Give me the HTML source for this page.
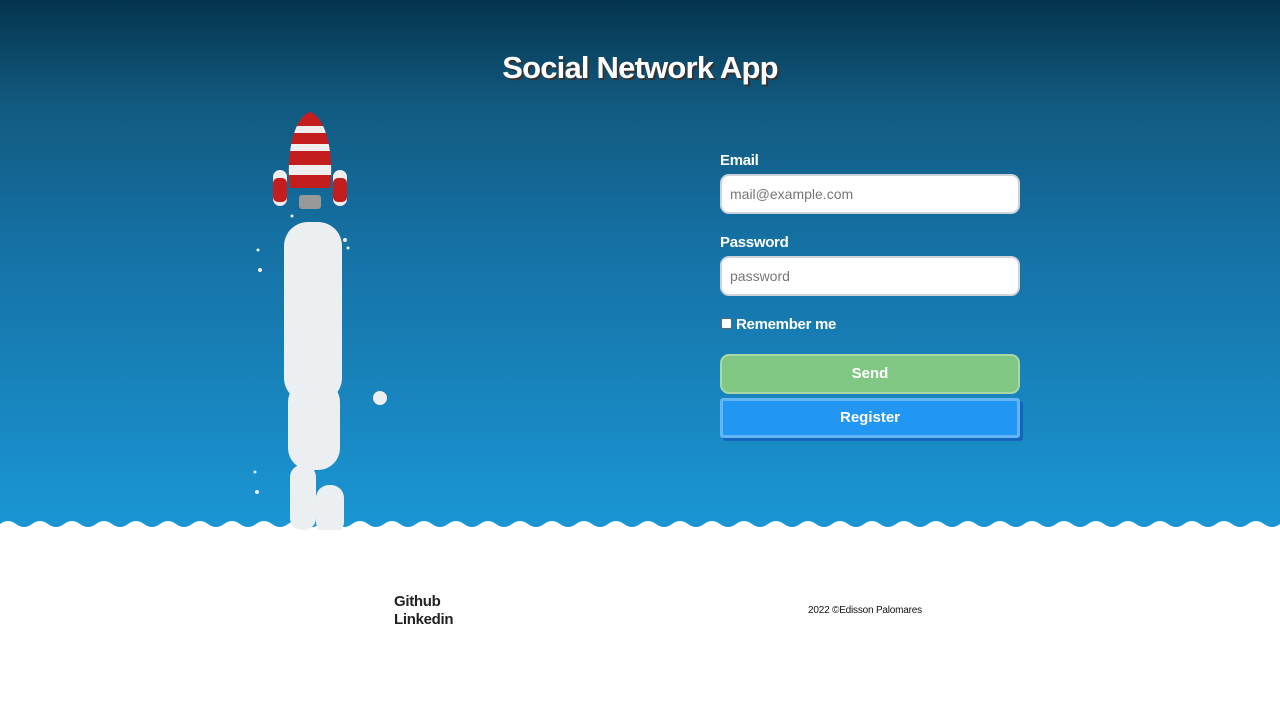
<!DOCTYPE html>
<html><head><style>
body{margin:0;width:1280px;height:720px;overflow:hidden;font-family:"Liberation Sans",sans-serif;background:#fff;position:relative}
.hero{position:absolute;left:0;top:0;width:1280px;height:528px;background:linear-gradient(#04344e 0%,#125a80 20%,#1570a3 45%,#1a96d4 100%)}
h1{position:absolute;top:50px;width:1280px;text-align:center;margin:0;color:#fff;font-size:31px;font-weight:bold;text-shadow:2px 2px 0 #333;letter-spacing:-0.8px}
label{position:absolute;color:#fff;font-weight:bold;font-size:15px;letter-spacing:-0.3px}
.in{position:absolute;left:720px;background:#fff;border:2px solid #cdd3d8;border-radius:9px;color:#777;font-size:14px;line-height:36px;padding-left:8px;box-sizing:border-box;height:40px;width:300px}
.btn{position:absolute;left:720px;width:300px;height:40px;box-sizing:border-box;color:#fff;font-weight:bold;font-size:15px;text-align:center;line-height:36px}
.foot{position:absolute;font-weight:bold;color:#222;font-size:15px;line-height:18px;letter-spacing:-0.3px}
</style></head><body>
<div class="hero"></div>
<svg style="position:absolute;left:0;top:518px" width="1280" height="14"><path d="M0 6 Q8 0 16 6 T32 6 T48 6 T64 6 T80 6 T96 6 T112 6 T128 6 T144 6 T160 6 T176 6 T192 6 T208 6 T224 6 T240 6 T256 6 T272 6 T288 6 T304 6 T320 6 T336 6 T352 6 T368 6 T384 6 T400 6 T416 6 T432 6 T448 6 T464 6 T480 6 T496 6 T512 6 T528 6 T544 6 T560 6 T576 6 T592 6 T608 6 T624 6 T640 6 T656 6 T672 6 T688 6 T704 6 T720 6 T736 6 T752 6 T768 6 T784 6 T800 6 T816 6 T832 6 T848 6 T864 6 T880 6 T896 6 T912 6 T928 6 T944 6 T960 6 T976 6 T992 6 T1008 6 T1024 6 T1040 6 T1056 6 T1072 6 T1088 6 T1104 6 T1120 6 T1136 6 T1152 6 T1168 6 T1184 6 T1200 6 T1216 6 T1232 6 T1248 6 T1264 6 T1280 6 V14 H0Z" fill="#fff"/></svg>
<svg style="position:absolute;left:250px;top:110px" width="150" height="420">
<defs><clipPath id="b"><path d="M60 2 C78 8 84 50 80 78 L40 78 C36 50 42 8 60 2Z"/></clipPath></defs>
<path d="M60 2 C78 8 84 50 80 78 L40 78 C36 50 42 8 60 2Z" fill="#c41d1d"/>
<g clip-path="url(#b)" fill="#eee"><rect x="30" y="16" width="60" height="7"/><rect x="30" y="34" width="60" height="7"/><rect x="30" y="55" width="60" height="10"/></g>
<rect x="23" y="60" width="14" height="36" rx="7" fill="#eee"/><rect x="23" y="68" width="14" height="24" rx="5" fill="#c41d1d"/>
<rect x="83" y="60" width="14" height="36" rx="7" fill="#eee"/><rect x="83" y="68" width="14" height="24" rx="5" fill="#c41d1d"/>
<rect x="49" y="85" width="22" height="14" rx="3" fill="#999"/>
<g fill="#eceff2"><rect x="34" y="112" width="58" height="180" rx="24"/><rect x="36" y="180" width="54" height="100" rx="20"/><rect x="38" y="270" width="52" height="90" rx="22"/><rect x="38" y="300" width="20" height="40" rx="10"/><rect x="40" y="355" width="26" height="65" rx="12"/><rect x="66" y="375" width="28" height="50" rx="13"/><circle cx="130" cy="288" r="7"/><circle cx="95" cy="130" r="2"/><circle cx="98" cy="138" r="1.5"/><circle cx="10" cy="160" r="2"/><circle cx="8" cy="140" r="1.5"/><circle cx="5" cy="362" r="1.5"/><circle cx="7" cy="382" r="2"/><circle cx="42" cy="106" r="1.5"/></g>
</svg>
<h1>Social Network App</h1>
<label style="left:720px;top:152px">Email</label>
<div class="in" style="top:174px">mail@example.com</div>
<label style="left:720px;top:234px">Password</label>
<div class="in" style="top:256px">password</div>
<div style="position:absolute;left:721px;top:318px;width:11px;height:11px;background:#fff;border:1px solid #666;border-radius:2px;box-sizing:border-box"></div>
<label style="left:736px;top:316px">Remember me</label>
<div class="btn" style="top:354px;background:#80c783;border:2px solid #a8d8a6;border-radius:9px">Send</div>
<div class="btn" style="top:398px;background:#2196f3;border:3px solid #64b5f6;border-radius:3px;box-shadow:3px 3px 0 #1565c0;line-height:34px">Register</div>
<div class="foot" style="left:394px;top:593px">Github<br>Linkedin</div>
<div style="position:absolute;left:808px;top:605px;font-size:10px;color:#111;letter-spacing:-0.2px">2022 ©Edisson Palomares</div>
</body></html>
